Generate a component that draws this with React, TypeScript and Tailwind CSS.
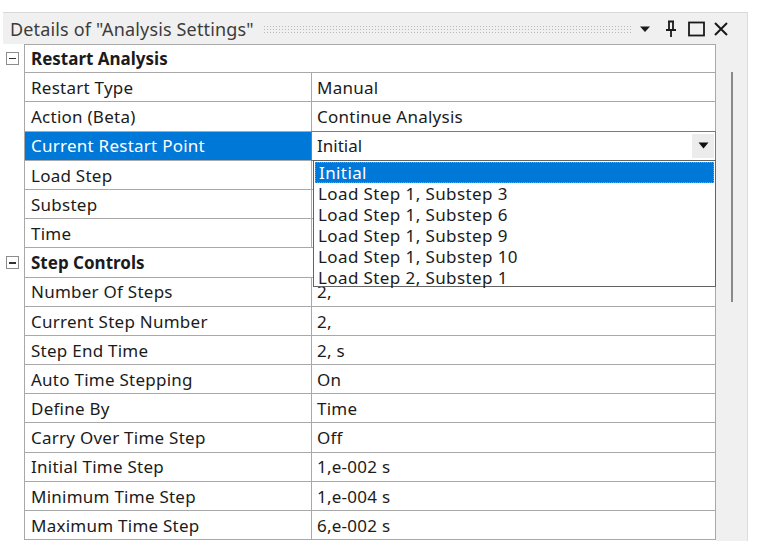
import React from "react";

type Row =
  | { kind: "cat"; label: string }
  | { kind: "prop"; label: string; value?: string; selected?: boolean; combo?: boolean };

const rows: Row[] = [
  { kind: "cat", label: "Restart Analysis" },
  { kind: "prop", label: "Restart Type", value: "Manual" },
  { kind: "prop", label: "Action (Beta)", value: "Continue Analysis" },
  { kind: "prop", label: "Current Restart Point", value: "Initial", selected: true, combo: true },
  { kind: "prop", label: "Load Step" },
  { kind: "prop", label: "Substep" },
  { kind: "prop", label: "Time" },
  { kind: "cat", label: "Step Controls" },
  { kind: "prop", label: "Number Of Steps", value: "2," },
  { kind: "prop", label: "Current Step Number", value: "2," },
  { kind: "prop", label: "Step End Time", value: "2, s" },
  { kind: "prop", label: "Auto Time Stepping", value: "On" },
  { kind: "prop", label: "Define By", value: "Time" },
  { kind: "prop", label: "Carry Over Time Step", value: "Off" },
  { kind: "prop", label: "Initial Time Step", value: "1,e-002 s" },
  { kind: "prop", label: "Minimum Time Step", value: "1,e-004 s" },
  { kind: "prop", label: "Maximum Time Step", value: "6,e-002 s" },
];

const options = [
  "Initial",
  "Load Step 1, Substep 3",
  "Load Step 1, Substep 6",
  "Load Step 1, Substep 9",
  "Load Step 1, Substep 10",
  "Load Step 2, Substep 1",
];

function Collapse() {
  return (
    <div className="w-[13px] h-[13px] border border-[#8c8c8c] bg-white flex items-center justify-center">
      <div className="w-[7px] h-[1.5px] bg-[#333]" />
    </div>
  );
}

export default function App() {
  return (
    <div
      className="w-[760px] h-[558px] bg-white text-[#1b1b1b] overflow-hidden"
      style={{ fontFamily: '"Noto Sans", "Open Sans", sans-serif' }}
    >
      <div className="pt-[12px] pl-[3px]">
        <div className="w-[745px] border-t border-[#d9d9d9]">
          {/* title bar */}
          <div className="h-[31px] bg-[#f0f0f0] flex items-center border-r border-[#dcdcdc]">
            <span className="pl-[7px] text-[18px] tracking-[0.15px] text-[#3c3c3c] whitespace-nowrap leading-none">
              Details of "Analysis Settings"
            </span>
            <div className="ml-[9px] w-[369px] h-[8px] bg-[radial-gradient(#b9b9b9_0.8px,transparent_0.9px)] bg-[length:3px_3px]" />
            <div className="flex items-center ml-[6px] gap-0">
              <svg width="12" height="8" viewBox="0 0 12 8" className="ml-[1px]">
                <path d="M1 1.5 L11 1.5 L6 7 Z" fill="#1a1a1a" />
              </svg>
              <svg width="14" height="18" viewBox="0 0 14 18" className="ml-[13px]">
                <path d="M4 1.5 H10 M5 1.5 V10 M9 1.5 V10 M2 10 H12 M7 10 V17" stroke="#1a1a1a" strokeWidth="1.8" fill="none" />
              </svg>
              <svg width="17" height="16" viewBox="0 0 17 16" className="ml-[10px]">
                <rect x="1" y="1.5" width="15" height="13" stroke="#1a1a1a" strokeWidth="1.8" fill="none" />
              </svg>
              <svg width="16" height="16" viewBox="0 0 16 16" className="ml-[8px]">
                <path d="M2 2 L14 14 M14 2 L2 14" stroke="#1a1a1a" strokeWidth="2" fill="none" />
              </svg>
            </div>
          </div>

          {/* body */}
          <div className="flex">
            <div className="relative w-[713px]">
              {rows.map((r, i) => (
                <div key={i} className="flex h-[29.2px]">
                  <div className="w-[21px] flex items-center justify-start pl-[3px]">
                    {r.kind === "cat" && <Collapse />}
                  </div>
                  {r.kind === "cat" ? (
                    <div
                      className={`w-[692px] border-x border-b border-[#a8a8a8] ${i === 0 ? "border-t" : ""} flex items-center pl-[6px] pt-[1px] text-[17px] font-bold`}
                    >
                      {r.label}
                    </div>
                  ) : (
                    <div className="w-[692px] flex border-x border-b border-[#a8a8a8]">
                      <div
                        className={`w-[287px] border-r border-[#a8a8a8] flex items-center pl-[6px] pt-[1px] text-[17px] tracking-[0.25px] whitespace-nowrap ${
                          r.selected ? "bg-[#0078d7] text-white" : ""
                        }`}
                      >
                        {r.label}
                      </div>
                      {r.combo ? (
                        <div className="flex-1 flex items-center outline outline-1 outline-[#7a7a7a] bg-white pl-[5px] pr-[1px]">
                          <span className="flex-1 text-[17px] pt-[1px]">{r.value}</span>
                          <div className="w-[22px] h-[24px] bg-[#ececec] flex items-center justify-center">
                            <svg width="11" height="7" viewBox="0 0 11 7">
                              <path d="M0.5 0.5 L10.5 0.5 L5.5 6.5 Z" fill="#111" />
                            </svg>
                          </div>
                        </div>
                      ) : (
                        <div className="flex-1 flex items-center pl-[5px] pt-[1px] text-[17px] tracking-[0.25px] whitespace-nowrap">
                          {r.value}
                        </div>
                      )}
                    </div>
                  )}
                </div>
              ))}

              {/* open drop-down list */}
              <div className="absolute left-[310px] top-[116px] w-[403px] h-[127px] bg-white border border-[#646464] z-10 pt-[1px] px-[1px]">
                {options.map((o, i) => (
                  <div
                    key={o}
                    className={`h-[21px] flex items-center pl-[3px] text-[17px] tracking-[0.4px] leading-none whitespace-nowrap ${
                      i === 0 ? "bg-[#0078d7] text-white border border-dotted border-[#d7883a]" : ""
                    }`}
                  >
                    {o}
                  </div>
                ))}
              </div>
            </div>

            {/* scrollbar strip */}
            <div className="w-[32px] h-[497px] bg-[#f0f0f0] border-r border-[#dcdcdc] pl-[15px] pt-[28px]">
              <div className="w-[2px] h-[230px] bg-[#8a8a8a]" />
            </div>
          </div>
        </div>
      </div>
    </div>
  );
}
